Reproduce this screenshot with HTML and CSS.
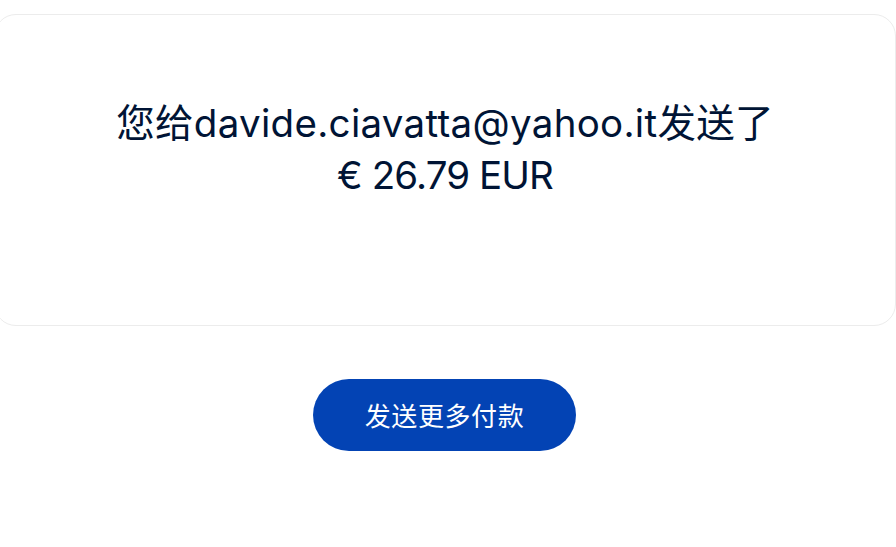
FILE: index.html
```html
<!DOCTYPE html>
<html lang="zh-CN">
<head>
    <meta charset="UTF-8">
    <meta name="viewport" content="width=device-width, initial-scale=1.0">
    <title>付款已发送</title>
    <link rel="stylesheet" href="styles.css">
</head>
<body>
    <main class="page">
        <section class="card">
            <h1 class="message">
                <span class="recipient">您给davide.ciavatta@yahoo.it发送了</span>
                <span class="amount">€ 26.79 EUR</span>
            </h1>
        </section>

        <div class="actions">
            <a href="#" class="send-button">发送更多付款</a>
        </div>
    </main>
</body>
</html>
```

FILE: styles.css
```css
* {
    margin: 0;
    padding: 0;
    box-sizing: border-box;
}

body {
    background-color: #fff;
    font-family: Inter, "Noto Sans CJK SC", sans-serif;
    overflow: hidden;
}

.page {
    padding-top: 14px;
}

.card {
    margin-left: -6px;
    width: 902px;
    height: 312px;
    border: 1px solid #ececec;
    border-radius: 22px;
    display: flex;
    justify-content: center;
    padding-top: 82px;
}

.message {
    font-size: 38.5px;
    font-weight: 400;
    line-height: 52px;
    color: #001435;
    text-align: center;
}

.message span {
    display: block;
}

.recipient {
    letter-spacing: 0.3px;
}

.amount {
    letter-spacing: -0.9px;
}

.actions {
    display: flex;
    justify-content: center;
    padding-top: 53px;
    padding-right: 7px;
}

.send-button {
    display: flex;
    align-items: center;
    justify-content: center;
    width: 263px;
    height: 72px;
    border-radius: 36px;
    background-color: #0343b4;
    color: #fff;
    text-decoration: none;
    font-size: 26px;
    letter-spacing: 0.6px;
    padding-bottom: 2px;
}
```
